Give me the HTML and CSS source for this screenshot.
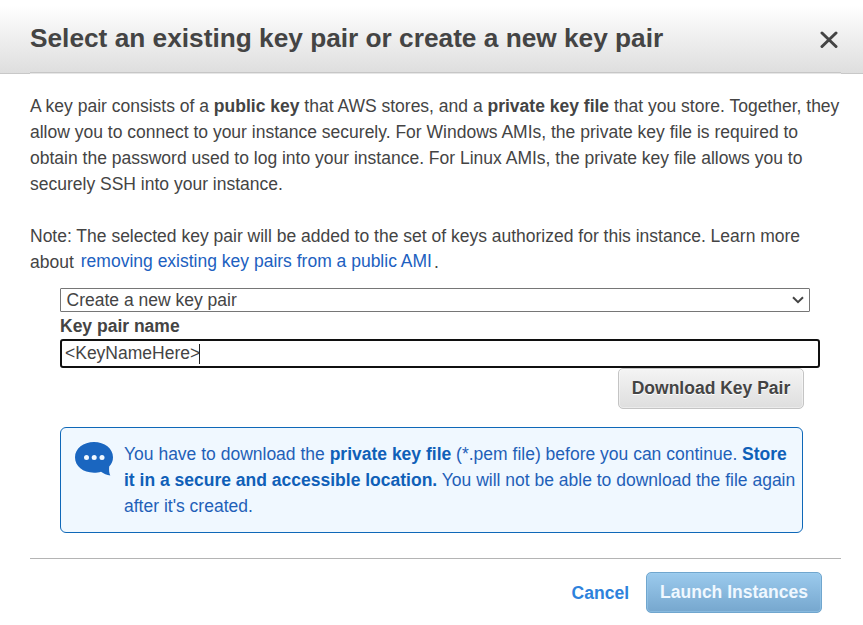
FILE: index.html
```
<!DOCTYPE html>
<html lang="en">
<head>
<meta charset="utf-8">
<title>Select an existing key pair</title>
<link rel="stylesheet" href="styles.css">
</head>
<body>
<div class="dialog">
  <header class="head">
    <div class="head-row">
      <h1>Select an existing key pair or create a new key pair</h1>
      <svg class="close" width="18" height="18" viewBox="0 0 18 18"><path d="M2 2L16 15.500M16 2L2 15.500" stroke="#444" stroke-width="3" stroke-linecap="round"/></svg>
    </div>
  </header>
  <main class="body">
    <p class="copy">A key pair consists of a <b>public key</b> that AWS stores, and a <b>private key file</b> that you store. Together, they<br>allow you to connect to your instance securely. For Windows AMIs, the private key file is required to<br>obtain the password used to log into your instance. For Linux AMIs, the private key file allows you to<br>securely SSH into your instance.</p>
    <p class="copy note">Note: The selected key pair will be added to the set of keys authorized for this instance. Learn more<br><span>about</span><a class="link">removing existing key pairs from a public AMI</a><span class="dot">.</span></p>
    <div class="form">
      <div class="select"><span>Create a new key pair</span><svg width="12" height="8" viewBox="0 0 12 8"><path d="M1 1.200L6 6.200L11 1.200" fill="none" stroke="#444" stroke-width="2"/></svg></div>
      <div class="label">Key pair name</div>
      <div class="input"><span>&lt;KeyNameHere&gt;</span><i class="caret"></i></div>
      <div class="actions"><div class="btn">Download Key Pair</div></div>
    </div>
    <div class="info">
      <svg class="bubble" width="38" height="34" viewBox="0 0 38 34"><path d="M19 0C8.500 0 0 6.500 0 15.300C0 24.200 8 30.700 19 30.700C21.500 30.700 24 30.400 26 29.700C28.500 31.500 32 33 35.300 33.500C34 31 33.900 27.500 34.200 24.500C36.700 22 38 19 38 15.300C38 6.500 29.500 0 19 0Z" fill="#1a66c0"/><g fill="#f0f8ff"><circle cx="11.500" cy="15.500" r="2.500"/><circle cx="19.200" cy="15.500" r="2.500"/><circle cx="27" cy="15.500" r="2.500"/></g></svg>
      <p class="copy blue">You have to download the <b>private key file</b> (*.pem file) before you can continue. <b>Store</b><br><b>it in a secure and accessible location.</b> You will not be able to download the file again<br>after it's created.</p>
    </div>
  </main>
  <footer class="foot">
    <a class="cancel">Cancel</a>
    <div class="btn primary">Launch Instances</div>
  </footer>
</div>
</body>
</html>
```
FILE: styles.css
```
body { margin: 0; background: #fff; color: #444; font: 17.5px/26px "Liberation Sans", Arial, sans-serif; }
.dialog { width: 863px; height: 625px; overflow: hidden; white-space: nowrap; }
.head { height: 73px; background: linear-gradient(#fff 5px, #dedede); border-bottom: 1px solid #c8c8c8; }
.head-row { box-sizing: border-box; height: 74px; margin: 0 22px 0 30px; border-bottom: 1px solid #e6e6e6; box-shadow: inset 0 -1px #c6c6c6; display: flex; justify-content: space-between; }
h1 { margin: 22px 0 0; font-size: 26.25px; line-height: 32px; }
.close { margin: 31px 3px 0 0; }
.body { padding: 19px 22px 0 30px; }
.copy { margin: 0; }
.note { margin-top: 26px; }
.link { color: #2060c0; margin-left: 7px; position: relative; top: -1px; }
.dot { margin-left: 2px; }
.form { padding: 13px 0 0 30px; height: 122px; }
.select { box-sizing: border-box; width: 750px; height: 24px; border: 1px solid #767676; border-radius: 1px; display: flex; align-items: center; justify-content: space-between; padding: 0 5px 0 5.5px; }
.label { font-weight: bold; line-height: 26px; padding-top: 1px; }
.input { box-sizing: border-box; width: 760px; height: 29px; border: 2px solid #101010; border-radius: 3px; padding-left: 3px; display: flex; align-items: center; line-height: 22px; padding-bottom: 2px; }
.caret { width: 1px; height: 20px; margin: 2px 0 0 -1px; background: #222; }
.actions { display: flex; justify-content: flex-end; width: 744px; }
.btn { box-sizing: border-box; width: 186px; height: 41px; border: 1px solid #c4c4c4; border-radius: 5px; background: linear-gradient(#f4f4f4, #dedede); box-shadow: inset 0 0 0 1px rgba(255,255,255,.4); font-weight: bold; line-height: 38px; text-align: center; text-shadow: 0 1px #fff; }
.info { box-sizing: border-box; width: 743px; height: 106px; margin: 17px 0 0 30px; border: 1px solid #0f68b8; border-radius: 6px; background: #f0f8ff; display: flex; padding: 13px 0 0 14px; }
.bubble { margin: 1px 11px 0 0; flex: none; }
.blue { color: #1f60b8; }
.blue b { color: #0f60b8; }
.foot { margin: 25px 22px 0 30px; border-top: 1px solid #b4b4b4; padding: 13px 19px 0 0; display: flex; justify-content: flex-end; }
.cancel { color: #2d82dc; font-weight: bold; line-height: 42px; height: 41px; margin-right: 17px; }
.primary { width: 176px; border-color: #70a6ce; background: linear-gradient(#9bcaed, #76a7ce); box-shadow: inset 0 0 0 1px rgba(160,208,242,.45); color: #f0f8ff; text-shadow: none; }
```
